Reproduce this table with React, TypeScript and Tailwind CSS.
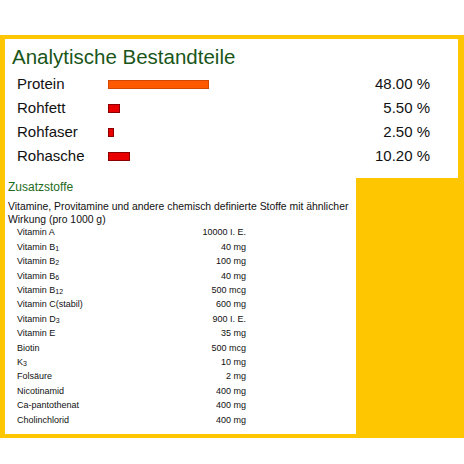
import React from "react";

type Bar = { name: string; value: string; width: number; tone: "orange" | "red" };

const bars: Bar[] = [
    { name: "Protein", value: "48.00 %", width: 101, tone: "orange" },
    { name: "Rohfett", value: "5.50 %", width: 12, tone: "red" },
    { name: "Rohfaser", value: "2.50 %", width: 6, tone: "red" },
    { name: "Rohasche", value: "10.20 %", width: 22, tone: "red" },
];

type Vit = { name: React.ReactNode; amount: string };

const Sub = ({ children }: { children: React.ReactNode }) => (
    <sub className="text-[7px] leading-none relative top-[1px]">{children}</sub>
);

const vitamins: Vit[] = [
    { name: "Vitamin A", amount: "10000 I. E." },
    { name: <>Vitamin B<Sub>1</Sub></>, amount: "40 mg" },
    { name: <>Vitamin B<Sub>2</Sub></>, amount: "100 mg" },
    { name: <>Vitamin B<Sub>6</Sub></>, amount: "40 mg" },
    { name: <>Vitamin B<Sub>12</Sub></>, amount: "500 mcg" },
    { name: "Vitamin C(stabil)", amount: "600 mg" },
    { name: <>Vitamin D<Sub>3</Sub></>, amount: "900 I. E." },
    { name: "Vitamin E", amount: "35 mg" },
    { name: "Biotin", amount: "500 mcg" },
    { name: <>K<Sub>3</Sub></>, amount: "10 mg" },
    { name: "Folsäure", amount: "2 mg" },
    { name: "Nicotinamid", amount: "400 mg" },
    { name: "Ca-pantothenat", amount: "400 mg" },
    { name: "Cholinchlorid", amount: "400 mg" },
];

export default function App() {
    return (
        <div
            className="w-[464px] h-[464px] bg-white pt-[35px] text-[#111]"
            style={{ fontFamily: '"Liberation Sans", Arial, sans-serif' }}
        >
            <div className="bg-[#fdc600] pl-[5px] pr-[6px] py-[4px]">
                {/* top panel */}
                <div className="bg-white h-[139px] pl-[12px] pr-[28px] pt-[6px]">
                    <h1 className="text-[20.5px] leading-[24px] text-[#1a561a] -ml-[5px]">
                        Analytische Bestandteile
                    </h1>
                    <div className="mt-[3px]">
                        {bars.map((b) => (
                            <div key={b.name} className="flex items-center h-[24px] text-[15px]">
                                <div className="w-[91px]">{b.name}</div>
                                <div className="flex-1 flex items-center">
                                    <div
                                        className={
                                            b.tone === "orange"
                                                ? "h-[9px] bg-[#ff5a00] border border-[#d24800]"
                                                : "h-[9px] bg-[#e80000] border border-[#8a0000]"
                                        }
                                        style={{ width: b.width }}
                                    />
                                </div>
                                <div className="text-right">{b.value}</div>
                            </div>
                        ))}
                    </div>
                </div>
                {/* bottom panel */}
                <div className="flex">
                    <div className="bg-white w-[351px] h-[256px] pl-[3px] pt-[2px]">
                        <h2 className="text-[12px] leading-[15px] text-[#236b1c]">Zusatzstoffe</h2>
                        <p className="mt-[5px] text-[10.4px] leading-[13px]">
                            Vitamine, Provitamine und andere chemisch definierte Stoffe mit ähnlicher
                            Wirkung (pro 1000 g)
                        </p>
                        <div className="pl-[9px] w-[238px] text-[9px]">
                            {vitamins.map((v, i) => (
                                <div key={i} className="flex items-center justify-between h-[14.4px]">
                                    <span>{v.name}</span>
                                    <span>{v.amount}</span>
                                </div>
                            ))}
                        </div>
                    </div>
                </div>
            </div>
        </div>
    );
}
